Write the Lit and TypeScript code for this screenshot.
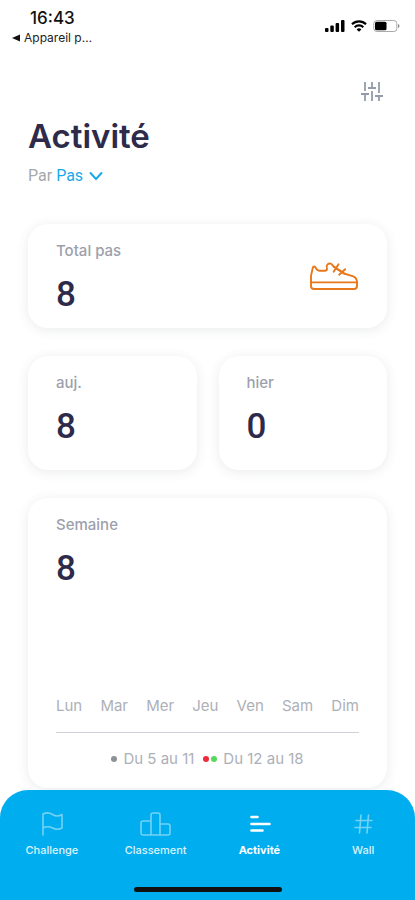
import { LitElement, html, css, svg } from "lit";
import { customElement, property } from "lit/decorators.js";
import { classMap } from "lit/directives/class-map.js";

@customElement("status-bar")
export class StatusBar extends LitElement {
  static styles = css`
    :host { display: flex; justify-content: space-between; height: 52px; color: #111; font-family: Inter, sans-serif; }
    .left { display: flex; flex-direction: column; padding: 8px 0 0 12px; }
    .time { font-size: 17px; line-height: 20px; font-weight: 500; padding-left: 18px; }
    .back { display: flex; align-items: center; gap: 4px; font-size: 12px; line-height: 20px; font-weight: 400; color: #222; text-decoration: none; }
    .right { display: flex; align-items: center; gap: 6px; height: 14px; padding: 19px 15px 0 0; }
  `;
  render() {
    return html`
      <div class="left">
        <span class="time">16:43</span>
        <a class="back" href="#back">
          <svg width="8" height="8" viewBox="0 0 8 8"><path d="M0 4 8 .5v7Z" fill="#111" /></svg>Appareil p…
        </a>
      </div>
      <div class="right">
        <svg width="20" height="14" viewBox="0 0 20 14" fill="#000">
          <rect x="0" y="9" width="3.500" height="4" rx="1" /><rect x="5.300" y="6.500" width="3.500" height="6.500" rx="1" />
          <rect x="10.600" y="4" width="3.500" height="9" rx="1" /><rect x="16" y="1" width="3.500" height="12" rx="1" />
        </svg>
        <svg width="16" height="14" viewBox="0 0 16 14" fill="none" stroke="#000" stroke-width="2.200">
          <path d="M1 5.200a10 10 0 0 1 14 0M3.700 8.200a6.200 6.200 0 0 1 8.600 0" /><path d="M8 12.800 5.600 10.400a3.400 3.400 0 0 1 4.800 0Z" fill="#000" stroke="none" />
        </svg>
        <svg width="27" height="14" viewBox="0 0 27 14">
          <rect x=".8" y="1.500" width="23" height="11" rx="3" fill="#fff" stroke="#aaa" />
          <rect x="2" y="2.700" width="11.500" height="8.600" rx="1.500" fill="#000" /><path d="M25 5v4q1.500-.6 1.500-2T25 5Z" fill="#888" />
        </svg>
      </div>`;
  }
}

const shoe = svg`<svg width="50" height="30" viewBox="0 0 50 30" fill="none" stroke="#e8771a" stroke-width="1.900" stroke-linejoin="round" stroke-linecap="round">
  <path d="M2 25V15.500C2 12.500 3.500 10 3.700 7 4 5 6 5 6.600 6.600 7.500 8.800 9 9.700 11 9.700h4.500c2.300 0 3-1.200 2.300-3.200-.7-2.500 1.600-4.600 3.900-3.800 1.500.5 2 2 3.800 3.400L35 12.500l8.500 2.700c3 1 4.500 3 4.500 6V25c0 2-1 3-3 3H5c-2 0-3-1-3-3Z"/>
  <path d="M2 21.400h46M29.500 3.300l-4.800 7.500M24.500 5.800l6 3.700M36.200 8.200l-6 5.500M31 9.600l4 3"/>
</svg>`;

@customElement("stat-card")
export class StatCard extends LitElement {
  @property() label = "";
  @property() value = "";
  static styles = css`
    :host { display: block; box-sizing: border-box; padding: 17px 28px 13px; border-radius: 20px; background: #fff; box-shadow: 0 2px 12px rgba(60, 75, 80, 0.11); }
    .row { display: flex; justify-content: space-between; align-items: center; }
    .label { margin: 0; font: 500 15px/20px Inter, sans-serif; color: #9c9fac; }
    .value { margin: 0; padding-top: 14px; font: 500 35px/40px Roboto, sans-serif; color: #2d2a4a; }
  `;
  render() {
    return html`
      <div class="row">
        <div>
          <h2 class="label">${this.label}</h2>
          <p class="value">${this.value}</p>
        </div>
        <slot name="icon"></slot>
      </div>
      <slot></slot>`;
  }
}

@customElement("tab-bar")
export class TabBar extends LitElement {
  static styles = css`
    :host { display: flex; flex-direction: column; justify-content: space-between; align-items: center; box-sizing: border-box; height: 110px; padding: 20px 0 8px; border-radius: 28px 28px 0 0; background: #00adee; }
    nav { display: grid; grid-template-columns: repeat(4, 1fr); width: 100%; }
    .tab { display: flex; flex-direction: column; align-items: center; gap: 4px; color: #fff; text-decoration: none; font: 500 11px/16px Inter, sans-serif; }
    .tab svg { opacity: 0.45; }
    .tab span { opacity: 0.85; }
    .tab.active { font-weight: 700; }
    .tab.active svg, .tab.active span { opacity: 1; }
    .home { width: 148px; height: 5px; border-radius: 3px; background: #111; }
  `;
  private tabs = [
    { name: "Challenge", icon: svg`<path d="M7 25V4q5-2.500 9.500.5T26 4.500V18q-5 2.500-9.500 0T7 18"/>` },
    { name: "Classement", icon: svg`<path d="M11 25V5q0-2 2-2h5q2 0 2 2v20M11 11H3q-2 0-2 2v10q0 2 2 2h25q2 0 2-2v-7q0-2-2-2h-8"/>` },
    { name: "Activité", icon: svg`<path stroke-width="2.600" d="M7.500 7h6M7.500 14h18M7.500 20.500h11"/>` },
    { name: "Wall", icon: svg`<path d="M13 5l-1.500 18M20.500 5 19 23M8 10.500h16M7 17.500h16"/>` },
  ];
  render() {
    return html`
      <nav>
        ${this.tabs.map((t) => html`
          <a class=${classMap({ tab: true, active: t.name === "Activité" })} href="#${t.name}">
            <svg width="31" height="28" viewBox="0 0 31 28" fill="none" stroke="#fff" stroke-width="1.600" stroke-linecap="round" stroke-linejoin="round">${t.icon}</svg>
            <span>${t.name}</span>
          </a>`)}
      </nav>
      <div class="home"></div>`;
  }
}

@customElement("app-root")
export class AppRoot extends LitElement {
  static styles = css`
    :host { display: flex; flex-direction: column; min-height: 100vh; background: #fff; font-family: Inter, sans-serif; }
    main { flex: 1; padding: 24px 28px 0; }
    .tools { display: flex; justify-content: flex-end; }
    .filter { display: flex; padding: 4px; border: 0; background: none; }
    h1 { margin: 4px 0 0; font-size: 33px; line-height: 48px; font-weight: 600; color: #2d2a4a; }
    .metric { display: flex; align-items: center; gap: 4px; padding: 4px 0 36px; font: 400 16px/24px Roboto, sans-serif; color: #a5a8ad; }
    .picker { display: grid; align-items: center; color: #1aa9e8; }
    .picker select { grid-area: 1 / 1; appearance: none; border: 0; margin: 0; padding: 0 20px 0 0; background: none; color: inherit; font: inherit; }
    .picker svg { grid-area: 1 / 1; justify-self: end; pointer-events: none; }
    .cards { display: grid; grid-template-columns: 1fr 1fr; gap: 28px 22px; }
    .wide { grid-column: 1 / -1; }
    .half { padding-bottom: 23px; }
    .days { display: flex; justify-content: space-between; margin: 0; padding: 107px 0 16px; list-style: none; border-bottom: 1px solid #cfd2d8; font: 400 15px/20px Inter, sans-serif; color: #adb0b8; }
    .legend { display: flex; justify-content: center; gap: 9px; padding: 16px 0 6px; font: 400 15px/20px Inter, sans-serif; color: #adb0b8; }
    .period { display: flex; align-items: center; }
    .period span { padding-left: 4px; }
    .dot { width: 6px; height: 6px; margin-right: 2px; border-radius: 50%; background: #8e9196; }
    .red { background: #ee2b3b; }
    .green { background: #55d85c; }
  `;
  render() {
    return html`
      <status-bar></status-bar>
      <main>
        <div class="tools">
          <button class="filter" aria-label="Filtres">
            <svg width="24" height="24" viewBox="0 0 24 24" fill="none" stroke="#939da9" stroke-width="1.800">
              <path d="M6 2v9M6 15v6M2 14h8M13 2v6M13 11v10M9 8h8M20 2v11M20 17v4M16 16h8" />
            </svg>
          </button>
        </div>
        <h1>Activité</h1>
        <div class="metric">
          <label for="metric">Par</label>
          <span class="picker">
            <select id="metric"><option>Pas</option></select>
            <svg width="14" height="10" viewBox="0 0 14 10" fill="none" stroke="currentColor" stroke-width="2" stroke-linecap="round"><path d="M1.500 2 7 8l5.500-6" /></svg>
          </span>
        </div>
        <div class="cards">
          <stat-card class="wide" label="Total pas" value="8"><span slot="icon">${shoe}</span></stat-card>
          <stat-card class="half" label="auj." value="8"></stat-card>
          <stat-card class="half" label="hier" value="0"></stat-card>
          <stat-card class="wide" label="Semaine" value="8">
            <ul class="days">
              ${["Lun", "Mar", "Mer", "Jeu", "Ven", "Sam", "Dim"].map((d) => html`<li>${d}</li>`)}
            </ul>
            <div class="legend">
              <div class="period"><i class="dot"></i><span>Du 5 au 11</span></div>
              <div class="period"><i class="dot red"></i><i class="dot green"></i><span>Du 12 au 18</span></div>
            </div>
          </stat-card>
        </div>
      </main>
      <tab-bar></tab-bar>`;
  }
}
